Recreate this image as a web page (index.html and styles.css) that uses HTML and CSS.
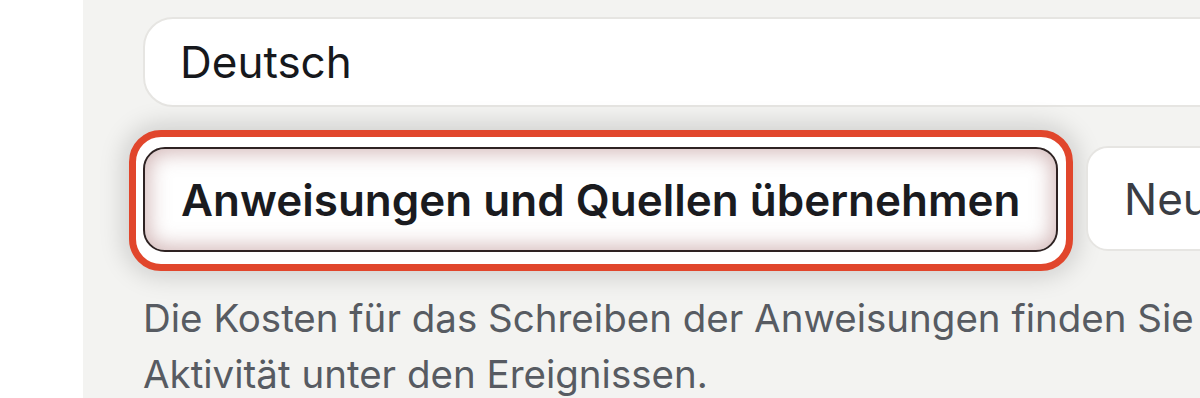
FILE: index.html
```html
<!DOCTYPE html>
<html lang="de">
<head>
<meta charset="utf-8">
<link rel="stylesheet" href="styles.css">
</head>
<body>
<div class="page">
  <aside class="sidebar"></aside>
  <main class="main">
    <div class="select">Deutsch</div>
    <div class="actions">
      <button class="btn btn-primary">Anweisungen und Quellen übernehmen</button>
      <button class="btn btn-secondary">Neu</button>
    </div>
    <p class="help">Die Kosten für das Schreiben der Anweisungen finden Sie<br>Aktivität unter den Ereignissen.</p>
  </main>
</div>
</body>
</html>
```
FILE: styles.css
```css
html, body {
  margin: 0;
  padding: 0;
  width: 1200px;
  height: 398px;
  overflow: hidden;
  background: #ffffff;
  font-family: Inter, "Noto Sans", sans-serif;
}

.page {
  display: flex;
  height: 398px;
}

.sidebar {
  flex: 0 0 83px;
  background: #ffffff;
}

.main {
  flex: 1 1 auto;
  min-width: 0;
  background: #f3f3f1;
  padding: 17px 0 0 60px;
  overflow: hidden;
}

.select {
  box-sizing: border-box;
  width: 1300px;
  height: 90px;
  display: flex;
  align-items: center;
  padding-left: 35px;
  background: #ffffff;
  border: 2px solid #e6e5e2;
  border-radius: 30px;
  font-size: 44px;
  color: #16181c;
}

.actions {
  position: relative;
  z-index: 0;
  display: flex;
  gap: 28px;
  margin-top: 40px;
  white-space: nowrap;
}

.btn {
  box-sizing: border-box;
  height: 105px;
  font-family: Inter, "Noto Sans", sans-serif;
  font-size: 44px;
  padding: 0 36px;
  border-radius: 22px;
  flex: 0 0 auto;
}

.btn-primary {
  position: relative;
  width: 915px;
  font-weight: 600;
  color: #1a1b1f;
  background: #ffffff;
  border: 2px solid #2e2222;
  box-shadow: inset 0 0 20px 4px rgba(170, 115, 115, 0.5);
  text-align: left;
}

.btn-primary::before {
  content: "";
  position: absolute;
  top: -19px;
  left: -16px;
  right: -17px;
  bottom: -21px;
  z-index: -1;
  background: #ffffff;
  border: 7px solid #e1462c;
  border-radius: 32px;
  box-shadow: 0 0 24px 6px rgba(0, 0, 0, 0.15);
}

.btn-secondary {
  width: 200px;
  text-align: left;
  font-weight: 400;
  color: #3a3d44;
  background: #ffffff;
  border: 2px solid #e6e5e2;
  margin-top: -1px;
}

.help {
  margin: 38px 0 0 0;
  font-size: 38.5px;
  line-height: 56px;
  color: #575b62;
  white-space: nowrap;
}
```
